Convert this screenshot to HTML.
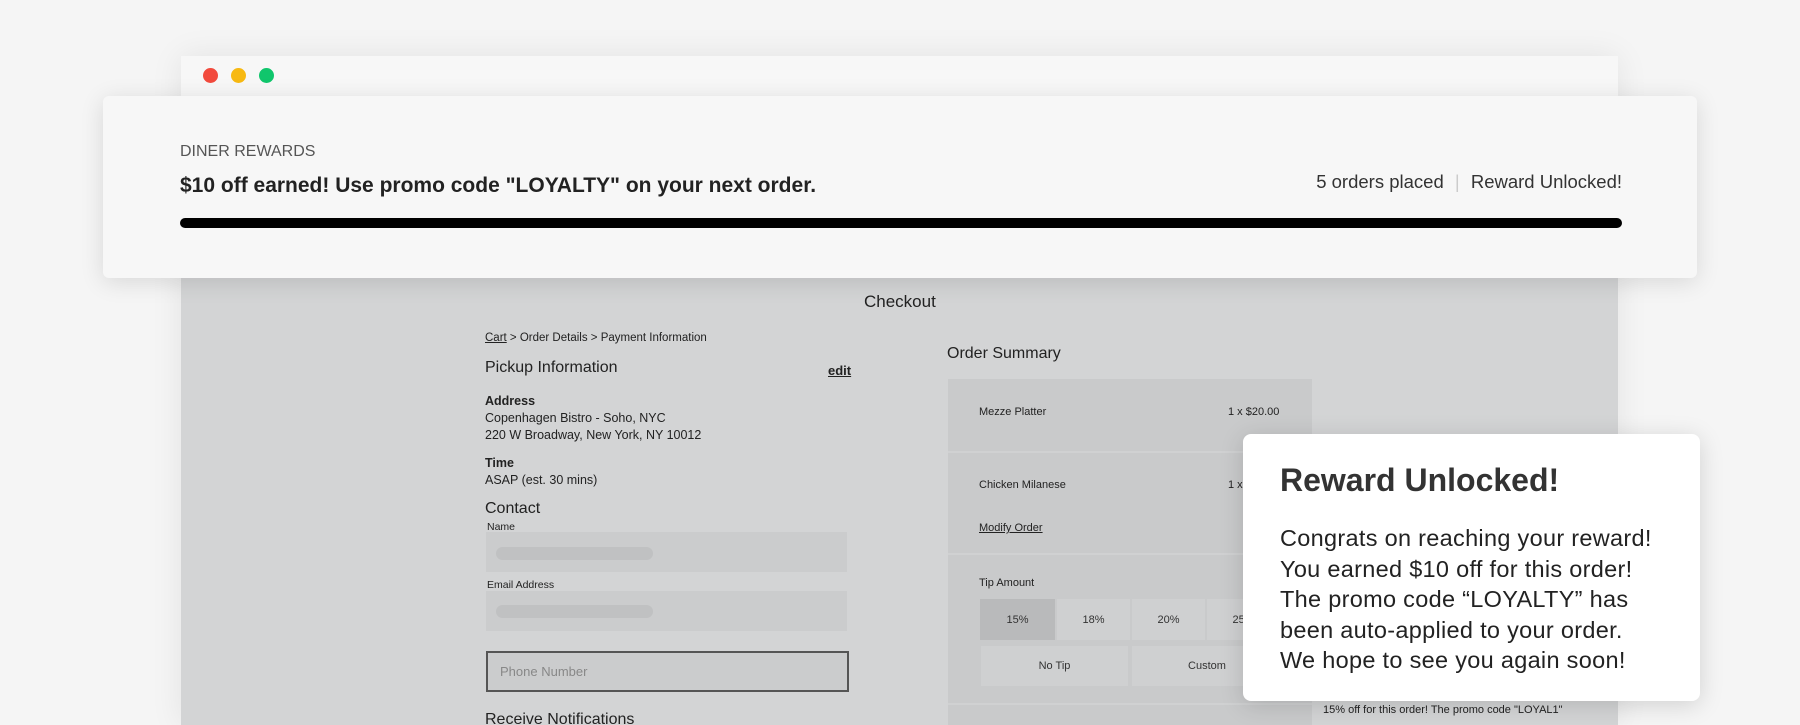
<!DOCTYPE html>
<html><head><style>
*{margin:0;padding:0;box-sizing:border-box}
html,body{width:1800px;height:725px;overflow:hidden}
body{background:#f5f5f5;font-family:"Liberation Sans",sans-serif;position:relative}
.a{position:absolute;white-space:nowrap}
.win{position:absolute;left:181px;top:56px;width:1437px;height:669px;background:#d3d4d5;box-shadow:0 0 30px rgba(0,0,0,.08)}
.bar{position:absolute;left:0;top:0;width:100%;height:44px;background:#f7f7f7}
.dot{position:absolute;top:12px;width:15px;height:15px;border-radius:50%}
.card{position:absolute;left:103px;top:96px;width:1594px;height:182px;background:#f7f7f7;border-radius:6px;box-shadow:0 4px 24px rgba(0,0,0,.12)}
.g{color:#222}
.inp{position:absolute;background:#cbcccd}
.pill{position:absolute;background:#c0c1c2;border-radius:7px;height:13px}
.tb{position:absolute;background:#cfd0d1;font-size:11px;color:#333;display:flex;align-items:center;justify-content:center}
.pop{position:absolute;left:1243px;top:434px;width:457px;height:267px;background:#fff;border-radius:8px;box-shadow:0 4px 24px rgba(0,0,0,.15)}
</style></head><body>
<div class="win">
 <div class="bar">
  <div class="dot" style="left:22px;background:#f24a3d"></div>
  <div class="dot" style="left:50px;background:#f7b912"></div>
  <div class="dot" style="left:78px;background:#10c66c"></div>
 </div>
</div>
<div class="a g" style="left:864px;top:292px;font-size:17px">Checkout</div>
<div class="a g" style="left:485px;top:332px;font-size:11.5px"><u>Cart</u> &gt; Order Details &gt; Payment Information</div>
<div class="a g" style="left:485px;top:359px;font-size:16px">Pickup Information</div>
<div class="a g" style="left:828px;top:363px;font-size:13px;font-weight:bold"><u>edit</u></div>
<div class="a g" style="left:485px;top:393px;font-size:12.5px;line-height:17px"><b>Address</b><br>Copenhagen Bistro - Soho, NYC<br>220 W Broadway, New York, NY 10012</div>
<div class="a g" style="left:485px;top:455px;font-size:12.5px;line-height:17px"><b>Time</b><br>ASAP (est. 30 mins)</div>
<div class="a g" style="left:485px;top:500px;font-size:16px">Contact</div>
<div class="a g" style="left:487px;top:521px;font-size:10.5px">Name</div>
<div class="inp" style="left:486px;top:532px;width:361px;height:40px"></div>
<div class="pill" style="left:496px;top:547px;width:157px"></div>
<div class="a g" style="left:487px;top:579px;font-size:10.5px">Email Address</div>
<div class="inp" style="left:486px;top:591px;width:361px;height:40px"></div>
<div class="pill" style="left:496px;top:605px;width:157px"></div>
<div class="inp" style="left:486px;top:651px;width:363px;height:41px;border:2px solid #555;font-size:13px;color:#888;padding:11px 12px">Phone Number</div>
<div class="a g" style="left:485px;top:711px;font-size:16px">Receive Notifications</div>
<div class="a g" style="left:947px;top:345px;font-size:16px">Order Summary</div>
<div class="inp" style="left:948px;top:379px;width:364px;height:360px;background:#c9cacb"></div>
<div class="a" style="left:948px;top:451px;width:364px;height:2px;background:#d0d1d2"></div>
<div class="a" style="left:948px;top:553px;width:364px;height:2px;background:#d0d1d2"></div>
<div class="a" style="left:948px;top:703px;width:364px;height:2px;background:#d0d1d2"></div>
<div class="a g" style="left:979px;top:406px;font-size:11px">Mezze Platter</div>
<div class="a g" style="left:1228px;top:406px;font-size:11px">1 x $20.00</div>
<div class="a g" style="left:979px;top:479px;font-size:11px">Chicken Milanese</div>
<div class="a g" style="left:1228px;top:479px;font-size:11px">1 x</div>
<div class="a g" style="left:979px;top:522px;font-size:11px"><u>Modify Order</u></div>
<div class="a g" style="left:979px;top:577px;font-size:11px">Tip Amount</div>
<div class="tb" style="left:980px;top:599px;width:75px;height:41px;background:#b9babb">15%</div>
<div class="tb" style="left:1057px;top:599px;width:73px;height:41px">18%</div>
<div class="tb" style="left:1132px;top:599px;width:73px;height:41px">20%</div>
<div class="tb" style="left:1207px;top:599px;width:73px;height:41px">25%</div>
<div class="tb" style="left:981px;top:646px;width:147px;height:40px">No Tip</div>
<div class="tb" style="left:1132px;top:646px;width:150px;height:40px">Custom</div>
<div class="a g" style="left:1323px;top:700px;font-size:11px;line-height:20px">15% off for this order! The promo code "LOYAL1"<br>has been auto-applied to your order. We hope to</div>
<div class="card">
 <div class="a" style="left:77px;top:47px;font-size:16px;color:#555">DINER REWARDS</div>
 <div class="a" style="left:77px;top:78px;font-size:21px;font-weight:bold;color:#222">$10 off earned! Use promo code "LOYALTY" on your next order.</div>
 <div class="a" style="right:75px;top:75px;font-size:18.5px;color:#333">5 orders placed <span style="color:#ccc;margin:0 6px">|</span> Reward Unlocked!</div>
 <div class="a" style="left:77px;top:122px;width:1442px;height:10px;background:#000;border-radius:5px"></div>
</div>
<div class="pop">
 <div class="a" style="left:37px;top:28px;font-size:32px;font-weight:bold;color:#333">Reward Unlocked!</div>
 <div class="a" style="left:37px;top:89px;font-size:23.5px;line-height:30.5px;letter-spacing:0.3px;color:#222">Congrats on reaching your reward!<br>You earned $10 off for this order!<br>The promo code “LOYALTY” has<br>been auto-applied to your order.<br>We hope to see you again soon!</div>
</div>
</body></html>
